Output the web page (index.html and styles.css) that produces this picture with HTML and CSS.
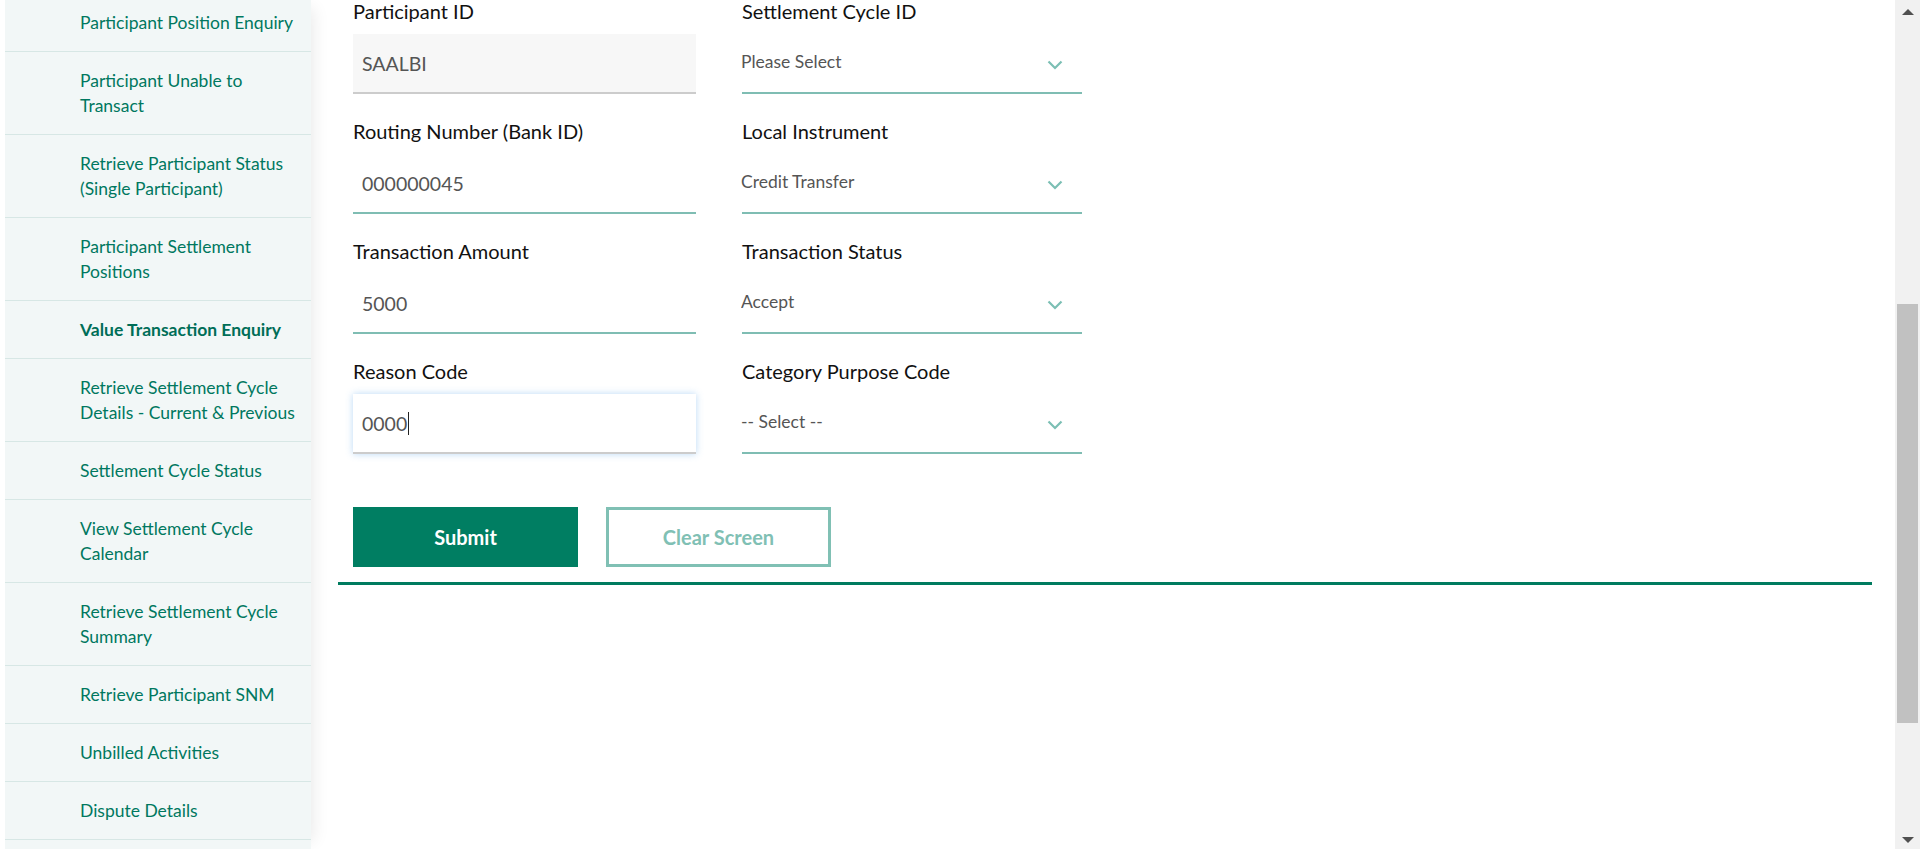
FILE: index.html
```html
<!DOCTYPE html>
<html lang="en">
<head>
<meta charset="utf-8">
<title>Value Transaction Enquiry</title>
<link rel="stylesheet" href="styles.css">
</head>
<body>
<div class="app">
  <nav class="sidebar">
    <ul class="menu">
      <li class="menu-item"><a href="#">Participant Position Enquiry</a></li>
      <li class="menu-item"><a href="#">Participant Unable to Transact</a></li>
      <li class="menu-item"><a href="#">Retrieve Participant Status (Single Participant)</a></li>
      <li class="menu-item"><a href="#">Participant Settlement Positions</a></li>
      <li class="menu-item is-active"><a href="#">Value Transaction Enquiry</a></li>
      <li class="menu-item"><a href="#">Retrieve Settlement Cycle Details - Current &amp; Previous</a></li>
      <li class="menu-item"><a href="#">Settlement Cycle Status</a></li>
      <li class="menu-item"><a href="#">View Settlement Cycle Calendar</a></li>
      <li class="menu-item"><a href="#">Retrieve Settlement Cycle Summary</a></li>
      <li class="menu-item"><a href="#">Retrieve Participant SNM</a></li>
      <li class="menu-item"><a href="#">Unbilled Activities</a></li>
      <li class="menu-item"><a href="#">Dispute Details</a></li>
    </ul>
  </nav>

  <main class="main">
    <form class="form">
      <div class="grid">
        <div class="field">
          <label class="label">Participant ID</label>
          <input class="input is-readonly" type="text" value="SAALBI" readonly>
        </div>
        <div class="field">
          <label class="label">Settlement Cycle ID</label>
          <div class="select-wrap">
            <select class="select"><option>Please Select</option></select>
            <svg class="chevron" width="16" height="10" viewBox="0 0 16 10"><path d="M1.5 1.5 L8 8 L14.5 1.5" fill="none" stroke="#7bbfb4" stroke-width="2.2"/></svg>
          </div>
        </div>

        <div class="field">
          <label class="label">Routing Number (Bank ID)</label>
          <input class="input" type="text" value="000000045">
        </div>
        <div class="field">
          <label class="label">Local Instrument</label>
          <div class="select-wrap">
            <select class="select"><option>Credit Transfer</option></select>
            <svg class="chevron" width="16" height="10" viewBox="0 0 16 10"><path d="M1.5 1.5 L8 8 L14.5 1.5" fill="none" stroke="#7bbfb4" stroke-width="2.2"/></svg>
          </div>
        </div>

        <div class="field">
          <label class="label">Transaction Amount</label>
          <input class="input" type="text" value="5000">
        </div>
        <div class="field">
          <label class="label">Transaction Status</label>
          <div class="select-wrap">
            <select class="select"><option>Accept</option></select>
            <svg class="chevron" width="16" height="10" viewBox="0 0 16 10"><path d="M1.5 1.5 L8 8 L14.5 1.5" fill="none" stroke="#7bbfb4" stroke-width="2.2"/></svg>
          </div>
        </div>

        <div class="field">
          <label class="label">Reason Code</label>
          <div class="input-focus">
            <input class="input is-focused" type="text" value="0000">
            <span class="caret-demo">0000<span class="caret"></span></span>
          </div>
        </div>
        <div class="field">
          <label class="label">Category Purpose Code</label>
          <div class="select-wrap">
            <select class="select"><option>-- Select --</option></select>
            <svg class="chevron" width="16" height="10" viewBox="0 0 16 10"><path d="M1.5 1.5 L8 8 L14.5 1.5" fill="none" stroke="#7bbfb4" stroke-width="2.2"/></svg>
          </div>
        </div>
      </div>

      <div class="actions">
        <button type="button" class="btn btn-primary">Submit</button>
        <button type="button" class="btn btn-outline">Clear Screen</button>
      </div>
    </form>
    <hr class="rule">
  </main>

  <div class="scrollbar" aria-hidden="true">
    <div class="sb-btn"><span class="tri-up"></span></div>
    <div class="sb-track">
      <div class="sb-thumb" style="margin-top:279px;height:419px"></div>
    </div>
    <div class="sb-btn"><span class="tri-down"></span></div>
  </div>
</div>
</body>
</html>
```

FILE: styles.css
```css
* { box-sizing: border-box; }

html, body {
  margin: 0;
  padding: 0;
  height: 100%;
  background: #ffffff;
  font-family: Lato, "Open Sans", sans-serif;
  overflow: hidden;
}

.app {
  display: flex;
  height: 849px;
  overflow: hidden;
}

/* ---------- Sidebar ---------- */
.sidebar {
  flex: 0 0 306px;
  margin-left: 5px;
  background: #f2f7f7;
  box-shadow: 10px 0 16px -8px rgba(0, 0, 0, 0.09);
  position: relative;
  z-index: 1;
  overflow: hidden;
}

.menu {
  list-style: none;
  margin: -6px 0 0 0;
  padding: 0;
}

.menu-item {
  border-bottom: 1px solid #d7e7e5;
  padding: 16px 8px 16px 75px;
}

.menu-item a {
  display: block;
  color: #00785f;
  text-decoration: none;
  font-size: 17.5px;
  line-height: 25px;
}

.menu-item.is-active a {
  font-weight: 700;
  color: #006e58;
}

/* ---------- Main ---------- */
.main {
  flex: 1 1 auto;
  margin-left: 27px;
  margin-right: 23px;
  display: flex;
  flex-direction: column;
}

.form {
  padding-left: 15px;
}

.grid {
  display: grid;
  grid-template-columns: 343px 340px;
  column-gap: 46px;
  row-gap: 26px;
}

.field {
  display: flex;
  flex-direction: column;
}

.label {
  font-size: 20px;
  line-height: 24px;
  color: #111111;
  margin-bottom: 11px;
  margin-top: -1px;
}

.input {
  width: 100%;
  height: 60px;
  border: 0;
  border-bottom: 2px solid #7fbdb3;
  background: transparent;
  padding: 0 9px;
  font-family: inherit;
  font-size: 19.5px;
  color: #555555;
  outline: none;
}

.input.is-readonly {
  background: #f7f7f7;
  border-bottom-color: #cccccc;
}

.input-focus {
  position: relative;
}

.input.is-focused {
  background: #ffffff;
  border-bottom-color: #cccccc;
  box-shadow: 0 0 7px rgba(102, 170, 235, 0.45);
  color: transparent;
}

.caret-demo {
  position: absolute;
  left: 9px;
  top: 0;
  height: 58px;
  display: flex;
  align-items: center;
  font-size: 19.5px;
  color: #555555;
  pointer-events: none;
}

.caret {
  display: inline-block;
  width: 1px;
  height: 23px;
  background: #222222;
  margin-left: 1px;
}

.select-wrap {
  position: relative;
  height: 60px;
  border-bottom: 2px solid #7fbdb3;
}

.select {
  appearance: none;
  -webkit-appearance: none;
  width: 100%;
  height: 58px;
  border: 0;
  background: transparent;
  padding: 0 40px 4px 0;
  margin-left: -1px;
  font-family: inherit;
  font-size: 17.5px;
  color: #555555;
  outline: none;
}

.chevron {
  position: absolute;
  right: 19px;
  top: 26px;
  pointer-events: none;
}

/* ---------- Buttons ---------- */
.actions {
  display: flex;
  gap: 28px;
  margin-top: 53px;
}

.btn {
  width: 225px;
  height: 60px;
  font-family: inherit;
  font-size: 20px;
  font-weight: 700;
  cursor: pointer;
}

.btn-primary {
  background: #007e62;
  color: #ffffff;
  border: 0;
}

.btn-outline {
  background: #ffffff;
  color: #80c0b4;
  border: 3px solid #80c0b4;
}

.rule {
  margin: 15px 0 0 0;
  border: 0;
  border-top: 3px solid #007b5f;
  height: 0;
}

/* ---------- Scrollbar ---------- */
.scrollbar {
  flex: 0 0 25px;
  background: #f1f1f1;
  display: flex;
  flex-direction: column;
  align-items: center;
}

.sb-btn {
  height: 25px;
  flex: 0 0 25px;
  display: flex;
  align-items: center;
  justify-content: center;
}

.sb-track {
  flex: 1 1 auto;
  width: 100%;
  display: flex;
  flex-direction: column;
  align-items: center;
}

.sb-thumb {
  width: 21px;
  background: #c1c1c1;
}

.tri-up {
  width: 0;
  height: 0;
  border-left: 6px solid transparent;
  border-right: 6px solid transparent;
  border-bottom: 6px solid #505050;
  margin-top: -1px;
}

.tri-down {
  width: 0;
  height: 0;
  border-left: 6px solid transparent;
  border-right: 6px solid transparent;
  border-top: 6px solid #505050;
  margin-bottom: -6px;
}
```
